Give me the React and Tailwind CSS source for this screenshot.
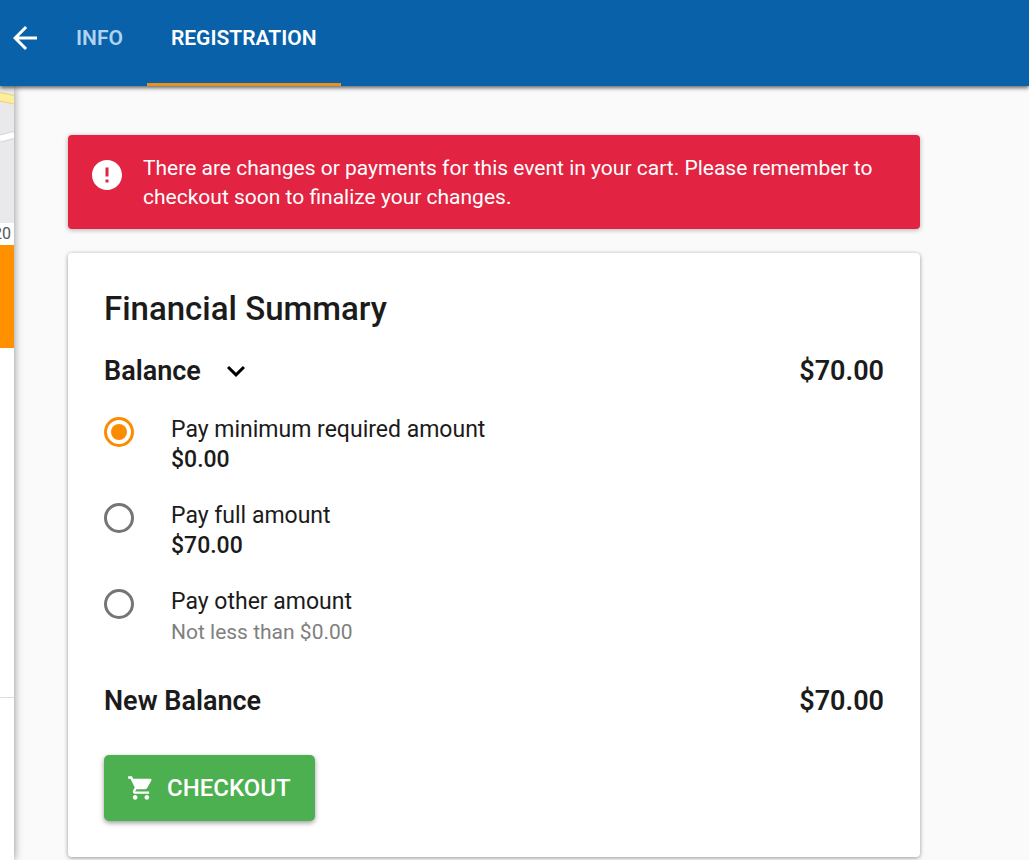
import { useState } from "react";
import { MdArrowBack, MdError, MdExpandMore, MdShoppingCart } from "react-icons/md";

const paymentOptions = [
  {
    id: "minimum",
    label: "Pay minimum required amount",
    amount: "$0.00",
  },
  {
    id: "full",
    label: "Pay full amount",
    amount: "$70.00",
  },
  {
    id: "other",
    label: "Pay other amount",
    hint: "Not less than $0.00",
  },
];

const Header = () => {
  return (
    <header className="relative z-10 flex h-[86px] bg-[#0961a9] text-[21px] font-semibold shadow-[0_2px_4px_rgba(0,0,0,0.6)]">
      <button type="button" aria-label="Back" className="flex h-[76px] w-[52px] items-center pl-[7px] text-white cursor-pointer">
        <MdArrowBack size={36} />
      </button>
      <nav className="flex">
        <a href="#info" className="px-6 pt-[22px] leading-8 text-[#b0d3f1]">INFO</a>
        <a href="#registration" className="border-b-3 border-[#e8911f] px-6 pt-[22px] leading-8 text-white">REGISTRATION</a>
      </nav>
    </header>
  );
};

// edge of the event list that stays visible under the page
const EventList = () => {
  return (
    <aside className="relative w-[14px] shrink-0 overflow-hidden bg-white shadow-[0_0_9px_rgba(0,0,0,0.45)]">
      <svg className="block" width="14" height="137" viewBox="0 0 14 137" aria-hidden="true">
        <rect width="14" height="137" fill="#e9e9eb" />
        <path d="M0 6L14 9V18L0 15Z" fill="#fdee9f" />
        <path d="M0 6.500L14 9.500M0 15L14 18" stroke="#ecd06f" strokeWidth="1" />
        <path d="M0 52.500L14 49" stroke="#d4d4d6" strokeWidth="8" />
        <path d="M0 52.500L14 49" stroke="#ffffff" strokeWidth="6" />
      </svg>
      <p className="flex h-[22px] justify-end pr-[3px] text-base leading-[22px] text-[#555555]">20</p>
      <div className="h-[103px] bg-[#ff9100]" />
      <div className="h-[350px] border-b border-[#dddddd]" />
    </aside>
  );
};

const Alert = () => {
  return (
    <div role="alert" className="flex gap-[18px] rounded-[4px] bg-[#e22341] pt-[19px] pr-6 pb-[17px] pl-[21px] text-white shadow-[0_1px_5px_rgba(0,0,0,0.3)]">
      <MdError size={36} className="mt-[3px] shrink-0" />
      <p className="text-[21px] leading-[29px]">
        There are changes or payments for this event in your cart. Please remember to checkout soon to finalize your changes.
      </p>
    </div>
  );
};

const PaymentOption = ({ option, checked, onChange }) => {
  return (
    <label className="flex items-start cursor-pointer">
      <input
        type="radio"
        name="payment"
        value={option.id}
        checked={checked}
        onChange={() => onChange(option.id)}
        className="mt-[2px] mr-[37px] grid size-[30px] shrink-0 appearance-none place-items-center rounded-full border-3 border-[#757575] checked:border-[#fb8c00] checked:before:size-4 checked:before:rounded-full checked:before:bg-[#fb8c00] checked:before:content-['']"
      />
      <span className="leading-[30px]">
        <span className="block text-[23px]">{option.label}</span>
        {option.amount && <span className="block text-[23px] font-medium">{option.amount}</span>}
        {option.hint && <span className="block text-[21px] text-[#808080]">{option.hint}</span>}
      </span>
    </label>
  );
};

const FinancialSummary = () => {
  const [selected, setSelected] = useState("minimum");

  return (
    <section className="mt-6 rounded-[4px] bg-white p-9 text-[#1b1b1b] shadow-[0_1px_4px_rgba(0,0,0,0.4)]">
      <h1 className="text-[33px] leading-10 font-medium">Financial Summary</h1>
      <div className="mt-6 flex h-9 items-center justify-between text-[27px] font-semibold">
        <div className="flex items-center gap-[17px]">
          <h2>Balance</h2>
          <button type="button" aria-label="Show balance details" className="text-black cursor-pointer">
            <MdExpandMore size={36} />
          </button>
        </div>
        <span>$70.00</span>
      </div>
      <div className="mt-[26px] flex flex-col gap-[26px]">
        {paymentOptions.map((option) => (
          <PaymentOption
            key={option.id}
            option={option}
            checked={selected === option.id}
            onChange={setSelected}
          />
        ))}
      </div>
      <div className="mt-9 flex h-9 items-center justify-between text-[27px] font-semibold">
        <h2>New Balance</h2>
        <span>$70.00</span>
      </div>
      <button type="button" className="mt-9 flex h-[66px] items-center gap-3 rounded-[5px] bg-[#4caf50] pr-6 pl-[23px] text-[24px] font-medium text-white shadow-[0_2px_5px_rgba(0,0,0,0.4)] cursor-pointer">
        <MdShoppingCart size={28} />
        CHECKOUT
      </button>
    </section>
  );
};

export default function App() {
  return (
    <div className="flex min-h-screen flex-col bg-[#fafafa] font-[Roboto,sans-serif]">
      <Header />
      <div className="flex flex-1">
        <EventList />
        <main className="flex-1 pt-[49px] pr-[109px] pb-[3px] pl-[54px]">
          <Alert />
          <FinancialSummary />
        </main>
      </div>
    </div>
  );
}
